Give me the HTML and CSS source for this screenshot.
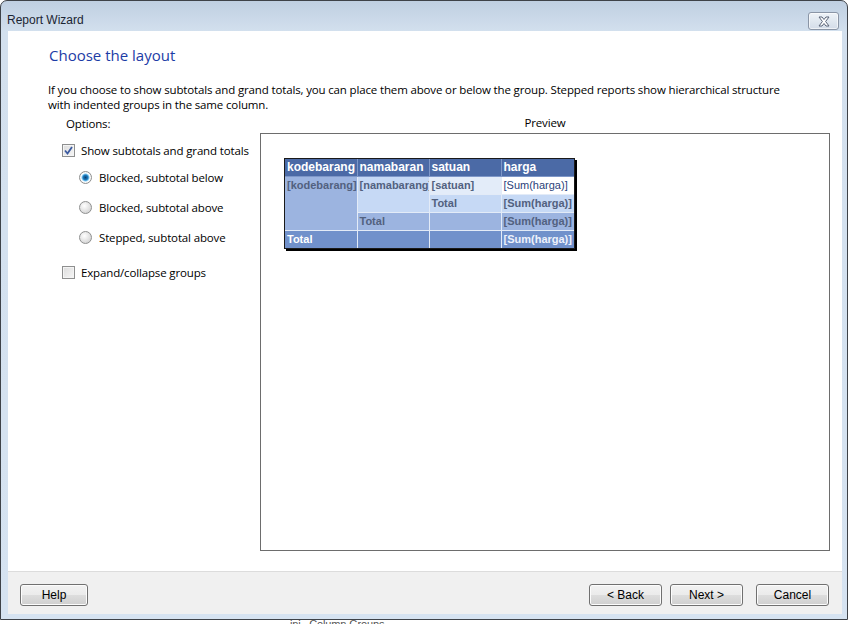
FILE: index.html
```html
<!DOCTYPE html>
<html>
<head>
<meta charset="utf-8">
<link rel="stylesheet" href="styles.css">
</head>
<body>
<div class="window">
  <div class="titlebar">
    <span class="title">Report Wizard</span>
    <div class="close">
      <svg width="16" height="11" viewBox="0 0 16 11"><path d="M3 1 L6 1 L8 3.5 L10 1 L13 1 L9.6 5.5 L13 10 L10 10 L8 7.5 L6 10 L3 10 L6.4 5.5 Z" fill="#fff" stroke="#5a6478" stroke-width="1" stroke-linejoin="round"/></svg>
    </div>
  </div>
  <div class="client">
    <div class="content">
      <h1 class="heading">Choose the layout</h1>
      <p class="desc">If you choose to show subtotals and grand totals, you can place them above or below the group. Stepped reports show hierarchical structure with indented groups in the same column.</p>
      <div class="panes">
        <div class="left">
          <div class="pane-label opt-label">Options:</div>
          <div class="opt check-row first">
            <span class="checkbox checked"><svg width="9" height="9" viewBox="0 0 9 9"><path d="M1 4.5 L3.5 7.5 L8 1" fill="none" stroke="#3b5aa0" stroke-width="1.8"/></svg></span>
            <span>Show subtotals and grand totals</span>
          </div>
          <div class="opt radio-row"><span class="radio selected"></span><span>Blocked, subtotal below</span></div>
          <div class="opt radio-row"><span class="radio"></span><span>Blocked, subtotal above</span></div>
          <div class="opt radio-row"><span class="radio"></span><span>Stepped, subtotal above</span></div>
          <div class="opt check-row last"><span class="checkbox"></span><span>Expand/collapse groups</span></div>
        </div>
        <div class="right">
          <div class="pane-label prev-label">Preview</div>
          <div class="preview">
            <div class="table-wrap">
              <table class="grid">
                <colgroup><col class="w1"><col class="w2"><col class="w3"><col class="w4"></colgroup>
                <tr class="hdr"><td>kodebarang</td><td>namabaran</td><td>satuan</td><td>harga</td></tr>
                <tr>
                  <td rowspan="3" class="c1">[kodebarang]</td>
                  <td rowspan="2" class="c2">[namabarang]</td>
                  <td class="c3">[satuan]</td>
                  <td class="c4">[Sum(harga)]</td>
                </tr>
                <tr><td class="c2">Total</td><td class="c2">[Sum(harga)]</td></tr>
                <tr><td class="c1">Total</td><td class="c1"></td><td class="c1">[Sum(harga)]</td></tr>
                <tr class="grand"><td>Total</td><td></td><td></td><td>[Sum(harga)]</td></tr>
              </table>
            </div>
          </div>
        </div>
      </div>
    </div>
    <div class="footer">
      <button class="btn help">Help</button>
      <div class="nav">
        <button class="btn">&lt; Back</button>
        <button class="btn">Next &gt;</button>
        <button class="btn cancel">Cancel</button>
      </div>
    </div>
  </div>
</div>
<div class="under">ini&nbsp;&nbsp;&nbsp;Column Groups</div>
</body>
</html>
```
FILE: styles.css
```css
html, body {
  margin: 0;
  padding: 0;
  background: #ffffff;
  width: 850px;
  height: 624px;
  overflow: hidden;
}
body {
  font-family: "Open Sans", "Noto Sans", sans-serif;
  font-size: 11.5px;
  letter-spacing: -0.15px;
  color: #000;
}
.window {
  width: 834px;
  height: 613px;
  border: 1px solid #3e4248;
  border-radius: 7px 7px 0 0;
  background: linear-gradient(to bottom, #bfcfe1 0px, #d3e0ee 31px, #d6e3f1 100%);
  display: flex;
  flex-direction: column;
  padding: 0 5px 5px 7px;
}
.titlebar {
  height: 30px;
  display: flex;
  align-items: center;
  justify-content: space-between;
  flex: none;
}
.title {
  font-family: "Liberation Sans", sans-serif;
  font-size: 12px;
  letter-spacing: 0;
  color: #1b2533;
  margin-top: 8px;
  margin-left: -1px;
}
.close {
  width: 29px;
  height: 16px;
  border: 1px solid #8a95a6;
  border-radius: 3px;
  background: linear-gradient(to bottom, #eef3f8, #d3dce8);
  display: flex;
  align-items: center;
  justify-content: center;
  margin-top: 10px;
  margin-right: 3px;
  box-shadow: inset 0 0 0 1px rgba(255,255,255,0.6);
}
.client {
  flex: 1;
  background: #fff;
  display: flex;
  flex-direction: column;
}
.content {
  flex: 1;
  padding: 0 12px 0 40px;
  display: flex;
  flex-direction: column;
}
.heading {
  margin: 14px 0 0 1px;
  font-weight: normal;
  font-size: 15px;
  letter-spacing: 0;
  color: #1c3ca6;
  line-height: 20px;
  height: 20px;
}
.desc {
  margin: 17px 0 0 0;
  line-height: 15px;
  width: 745px;
}
.panes {
  display: flex;
  margin-top: 4px;
}
.left {
  width: 212px;
  flex: none;
  white-space: nowrap;
}
.right {
  flex: 1;
  display: flex;
  flex-direction: column;
}
.pane-label {
  height: 16px;
  line-height: 16px;
}
.opt-label {
  padding-left: 18px;
}
.prev-label {
  text-align: center;
  margin-top: -1px;
}
.preview {
  border: 1px solid #6d6d6d;
  margin-top: 2px;
  padding: 24px 0 0 23px;
  box-sizing: border-box;
  height: 418px;
}
.opt {
  display: flex;
  align-items: center;
  height: 30px;
  gap: 6px;
}
.check-row { padding-left: 14px; }
.check-row.first { margin-top: 7px; height: 22px; }
.check-row.last { margin-top: 5px; }
.radio-row { padding-left: 31px; gap: 7px; }
.radio-row:nth-child(3) { margin-top: 1px; }
.checkbox {
  width: 11px;
  height: 11px;
  border: 1px solid #8e8f8f;
  background: linear-gradient(135deg, #dcdcdc, #f6f6f6);
  box-shadow: inset 0 0 0 1px #f4f4f4;
  display: flex;
  align-items: center;
  justify-content: center;
  flex: none;
}
.radio {
  width: 11px;
  height: 11px;
  border: 1px solid #8e8f8f;
  border-radius: 50%;
  background: radial-gradient(circle at 40% 35%, #ffffff, #d4d4d4 80%);
  flex: none;
}
.radio.selected {
  background: radial-gradient(circle at 50% 50%, #0b3c70 0, #1b7fc2 2.5px, #8fd0f5 3.6px, #ffffff 4.5px, #d7d7d7 100%);
}
.table-wrap {
  display: inline-block;
  border: 1px solid #1a1a1a;
  box-shadow: 2px 2px 0 #000;
  background: #fff;
  line-height: 0;
}
.grid {
  border-collapse: collapse;
  font-family: "Liberation Sans", sans-serif;
  font-size: 11px;
  letter-spacing: 0;
  font-weight: bold;
  color: #52617f;
  table-layout: fixed;
  width: 289px;
}
.grid col.w1, .grid col.w2, .grid col.w3 { width: 72px; }
.grid col.w4 { width: 73px; }
.grid td {
  border: 1px solid #e3ebf7;
  height: 17px;
  padding: 0 0 0 2px;
  white-space: nowrap;
  overflow: hidden;
  vertical-align: top;
  line-height: 17px;
  box-sizing: border-box;
}
.grid tr:first-child td { border-top: none; }
.grid td:first-child { border-left: none; }
.grid td:last-child { border-right: none; }
.grid .grand td { border-bottom: none; }
.grid .hdr td {
  background: #4b6aa6;
  color: #fff;
  font-size: 12px;
  border-color: #7e97c8;
  padding-left: 2px;
}
.grid .c1 { background: #9cb4e0; }
.grid .c2 { background: #c6d9f5; }
.grid .c3 { background: #e3ecf9; }
.grid .c4 { background: #fff; font-weight: normal; color: #2b3f7a; }
.grid .grand td {
  background: #7191cb;
  color: #fff;
}
.grid .grand td:last-child { color: #eef2fb; }
.footer {
  height: 43px;
  flex: none;
  background: #f0f0f0;
  border-top: 1px solid #dcdcdc;
  display: flex;
  align-items: flex-start;
  justify-content: space-between;
  padding: 12px 13px 0 12px;
  box-sizing: border-box;
}
.nav {
  display: flex;
  gap: 8px;
}
.btn {
  width: 73px;
  height: 22px;
  border: 1px solid #707070;
  border-radius: 3px;
  background: linear-gradient(to bottom, #f2f2f2 0%, #ebebeb 50%, #dddddd 51%, #cfcfcf 100%);
  font-family: "Liberation Sans", sans-serif;
  font-size: 12px;
  letter-spacing: 0;
  color: #000;
  padding: 0;
  box-shadow: inset 0 0 0 1px #fcfcfc;
}
.btn.help { width: 68px; }
.btn.cancel { margin-left: 5px; }
.under {
  margin-left: 290px;
  margin-top: -1px;
  font-family: "Liberation Sans", sans-serif;
  font-size: 11px;
  color: #555;
  line-height: 10px;
}
```
